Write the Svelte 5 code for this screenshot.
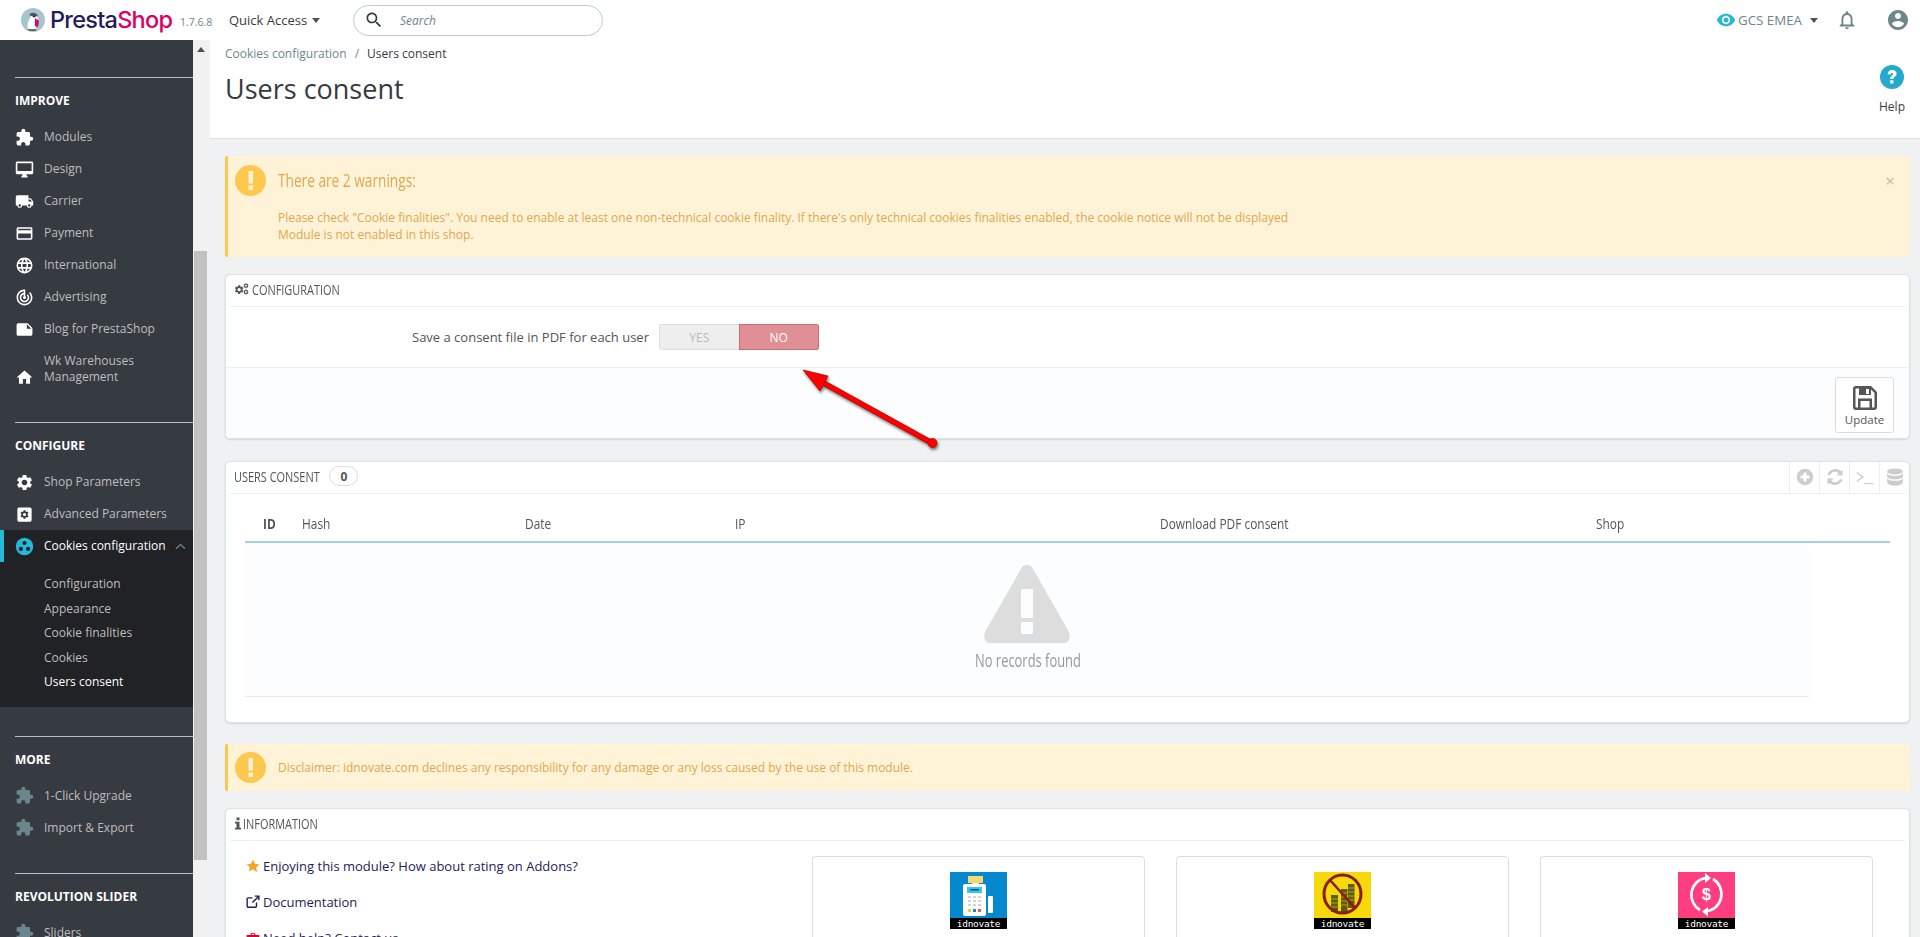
<script>
  const puzzle = "M20.5 11H19V7c0-1.1-.9-2-2-2h-4V3.5C13 2.12 11.88 1 10.5 1S8 2.12 8 3.5V5H4c-1.1 0-1.99.9-1.99 2v3.8H3.5c1.49 0 2.7 1.21 2.7 2.7s-1.21 2.7-2.7 2.7H2V20c0 1.1.9 2 2 2h3.8v-1.5c0-1.49 1.21-2.7 2.7-2.7 1.49 0 2.7 1.21 2.7 2.7V22H17c1.1 0 2-.9 2-2v-4h1.5c1.38 0 2.5-1.12 2.5-2.5S21.88 11 20.5 11z";
  const gear = "M19.14 12.94c.04-.3.06-.61.06-.94 0-.32-.02-.64-.07-.94l2.03-1.58a.49.49 0 0 0 .12-.61l-1.92-3.32a.488.488 0 0 0-.59-.22l-2.39.96c-.5-.38-1.03-.7-1.62-.94l-.36-2.54a.484.484 0 0 0-.48-.41h-3.84c-.24 0-.43.17-.47.41l-.36 2.54c-.59.24-1.13.57-1.62.94l-2.39-.96c-.22-.08-.47 0-.59.22L2.74 8.87c-.12.21-.08.47.12.61l2.03 1.58c-.05.3-.09.63-.09.94s.02.64.07.94l-2.03 1.58a.49.49 0 0 0-.12.61l1.92 3.32c.12.22.37.29.59.22l2.39-.96c.5.38 1.03.7 1.62.94l.36 2.54c.05.24.24.41.48.41h3.84c.24 0 .44-.17.47-.41l.36-2.54c.59-.24 1.13-.56 1.62-.94l2.39.96c.22.08.47 0 .59-.22l1.92-3.32c.12-.22.07-.47-.12-.61l-2.01-1.58zM12 15.6c-1.98 0-3.6-1.62-3.6-3.6s1.62-3.6 3.6-3.6 3.6 1.62 3.6 3.6-1.62 3.6-3.6 3.6z";
  const sections = [
    { title: "IMPROVE", items: [
      { label: "Modules", d: puzzle },
      { label: "Design", d: "M21 2H3c-1.1 0-2 .9-2 2v12c0 1.1.9 2 2 2h7l-2 3v1h8v-1l-2-3h7c1.1 0 2-.9 2-2V4c0-1.1-.9-2-2-2zm0 12H3V4h18v10z" },
      { label: "Carrier", d: "M20 8h-3V4H3c-1.1 0-2 .9-2 2v11h2c0 1.66 1.34 3 3 3s3-1.34 3-3h6c0 1.66 1.34 3 3 3s3-1.34 3-3h2v-5l-3-4zM6 18.5c-.83 0-1.5-.67-1.5-1.5s.67-1.5 1.5-1.5 1.5.67 1.5 1.5-.67 1.5-1.5 1.5zm13.5-9l1.96 2.5H17V9.5h2.5zm-1.5 9c-.83 0-1.5-.67-1.5-1.5s.67-1.5 1.5-1.5 1.5.67 1.5 1.5-.67 1.5-1.5 1.5z" },
      { label: "Payment", d: "M20 4H4c-1.11 0-1.99.89-1.99 2L2 18c0 1.11.89 2 2 2h16c1.11 0 2-.89 2-2V6c0-1.11-.89-2-2-2zm0 14H4v-6h16v6zm0-10H4V6h16v2z" },
      { label: "International", d: "M11.99 2C6.47 2 2 6.48 2 12s4.47 10 9.99 10C17.52 22 22 17.52 22 12S17.52 2 11.99 2zm6.93 6h-2.95c-.32-1.25-.78-2.45-1.38-3.56 1.84.63 3.37 1.91 4.33 3.56zM12 4.04c.83 1.2 1.48 2.53 1.91 3.96h-3.82c.43-1.43 1.08-2.76 1.91-3.96zM4.26 14C4.1 13.36 4 12.69 4 12s.1-1.36.26-2h3.38c-.08.66-.14 1.32-.14 2 0 .68.06 1.34.14 2H4.26zm.82 2h2.95c.32 1.25.78 2.45 1.38 3.56-1.84-.63-3.37-1.9-4.33-3.56zm2.95-8H5.08c.96-1.66 2.49-2.93 4.33-3.56C8.81 5.55 8.35 6.75 8.03 8zM12 19.96c-.83-1.2-1.48-2.53-1.91-3.96h3.82c-.43 1.43-1.08 2.76-1.91 3.96zM14.34 14H9.66c-.09-.66-.16-1.32-.16-2 0-.68.07-1.35.16-2h4.68c.09.65.16 1.32.16 2 0 .68-.07 1.34-.16 2zm.25 5.56c.6-1.11 1.06-2.31 1.38-3.56h2.95c-.96 1.65-2.49 2.93-4.33 3.56zM16.36 14c.08-.66.14-1.32.14-2 0-.68-.06-1.34-.14-2h3.38c.16.64.26 1.31.26 2s-.1 1.36-.26 2h-3.38z" },
      { label: "Advertising", d: "M19.07 4.93l-1.41 1.41C19.1 7.79 20 9.79 20 12c0 4.42-3.58 8-8 8s-8-3.58-8-8c0-4.08 3.05-7.44 7-7.93v2.02C8.16 6.57 6 9.03 6 12c0 3.31 2.69 6 6 6s6-2.69 6-6c0-1.66-.67-3.16-1.76-4.24l-1.41 1.41C15.55 9.9 16 10.9 16 12c0 2.21-1.79 4-4 4s-4-1.79-4-4c0-1.86 1.28-3.41 3-3.86v2.14c-.6.35-1 .98-1 1.72 0 1.1.9 2 2 2s2-.9 2-2c0-.74-.4-1.38-1-1.72V2h-1C6.48 2 2 6.48 2 12s4.48 10 10 10 10-4.48 10-10c0-2.76-1.12-5.26-2.93-7.07z" },
      { label: "Blog for PrestaShop", d: "M22 10l-6-6H4c-1.1 0-2 .9-2 2v12.01c0 1.1.9 1.99 2 1.99l16-.01c1.1 0 2-.89 2-1.99v-8zm-7-4.5l5.5 5.5H15V5.5z" },
      { label: "Wk Warehouses Management", d: "M10 20v-6h4v6h5v-8h3L12 3 2 12h3v8z", tall: true },
    ]},
    { title: "CONFIGURE", items: [
      { label: "Shop Parameters", d: gear },
      { label: "Advanced Parameters", d: "M5 3h14a2 2 0 0 1 2 2v14a2 2 0 0 1-2 2H5a2 2 0 0 1-2-2V5a2 2 0 0 1 2-2zm8.2 3.5h-2.4l-.3 1.6-1 .6-1.5-.6-1.2 2 1.3 1-.1.9.1.9-1.3 1 1.2 2 1.5-.6 1 .6.3 1.6h2.4l.3-1.6 1-.6 1.5.6 1.2-2-1.3-1 .1-.9-.1-.9 1.3-1-1.2-2-1.5.6-1-.6-.3-1.6zM12 10a2 2 0 1 1 0 4 2 2 0 0 1 0-4z" },
      { label: "Cookies configuration", cookie: true, active: true },
    ]},
    { title: "MORE", items: [
      { label: "1-Click Upgrade", d: puzzle, muted: true },
      { label: "Import & Export", d: puzzle, muted: true },
    ]},
    { title: "REVOLUTION SLIDER", items: [
      { label: "Sliders", d: puzzle, muted: true },
    ]},
  ];
  const sub = ["Configuration", "Appearance", "Cookie finalities", "Cookies", "Users consent"];
  const cols = ["ID", "Hash", "Date", "IP", "Download PDF consent", "Shop"];
</script>

<div class="page">
  <header class="topbar">
    <div class="logo">
      <svg class="bird" viewBox="0 0 24 24">
        <circle cx="12" cy="12" r="12" fill="#a9c5cc"/>
        <path d="M7 22c-1-5 0-9 2-12 1-3 5-4 7-2l1 3-3 2 1 7c-2 3-6 3-8 2z" fill="#fff"/>
        <path d="M8 7c2-3 7-3 9 1l-4 1c-2-1-3-1-5-2z" fill="#4a5a60"/>
        <path d="M14 10l4 3-1 6-3-1z" fill="#df0067"/>
        <circle cx="13" cy="8.5" r="1" fill="#251b5b"/>
        <path d="M6 21h9v2H8z" fill="#6c6c5c"/>
      </svg>
      <span class="wordmark"><span class="presta">Presta</span><span class="shop">Shop</span></span>
    </div>
    <span class="version">1.7.6.8</span>
    <span class="quick">Quick Access<i class="caret"></i></span>
    <div class="search">
      <svg class="mag" viewBox="0 0 24 24"><path d="M15.5 14h-.79l-.28-.27C15.41 12.59 16 11.11 16 9.5 16 5.91 13.09 3 9.5 3S3 5.91 3 9.5 5.91 16 9.5 16c1.61 0 3.09-.59 4.23-1.57l.27.28v.79l5 4.99L20.49 19l-4.99-5zm-6 0C7.01 14 5 11.99 5 9.5S7.01 5 9.5 5 14 7.01 14 9.5 11.99 14 9.5 14z"/></svg>
      <span>Search</span>
    </div>
    <div class="top-right">
      <svg class="eye" viewBox="0 0 24 24"><path d="M12 4.5C7 4.5 2.73 7.61 1 12c1.73 4.39 6 7.5 11 7.5s9.27-3.11 11-7.5c-1.73-4.39-6-7.5-11-7.5zM12 17c-2.76 0-5-2.24-5-5s2.24-5 5-5 5 2.24 5 5-2.24 5-5 5zm0-8c-1.66 0-3 1.34-3 3s1.34 3 3 3 3-1.34 3-3-1.34-3-3-3z"/></svg>
      <span class="shopname">GCS EMEA</span>
      <i class="caret"></i>
      <svg class="bell" viewBox="0 0 24 24"><path d="M12 22c1.1 0 2-.9 2-2h-4c0 1.1.9 2 2 2zm6-6v-5c0-3.07-1.63-5.64-4.5-6.32V4c0-.83-.67-1.5-1.5-1.5s-1.5.67-1.5 1.5v.68C7.64 5.36 6 7.92 6 11v5l-2 2v1h16v-1l-2-2zm-2 1H8v-6c0-2.48 1.51-4.5 4-4.5s4 2.02 4 4.5v6z"/></svg>
      <svg class="user" viewBox="2 2 20 20"><path d="M12 2C6.48 2 2 6.48 2 12s4.48 10 10 10 10-4.48 10-10S17.52 2 12 2zm0 3c1.66 0 3 1.34 3 3s-1.34 3-3 3-3-1.34-3-3 1.34-3 3-3zm0 14.2c-2.5 0-4.71-1.28-6-3.22.03-1.99 4-3.08 6-3.08 1.99 0 5.97 1.09 6 3.08-1.29 1.94-3.5 3.22-6 3.22z"/></svg>
    </div>
  </header>

  <div class="frame">
    <nav class="sidebar">
      {#each sections as s}
        <section class="navsec">
          <h4>{s.title}</h4>
          {#each s.items as it}
            <div class="item" class:tall={it.tall} class:active={it.active} class:muted={it.muted}>
              {#if it.cookie}
                <svg class="ic" viewBox="0 0 24 24"><circle cx="12" cy="12" r="11" fill="#25b9d7"/><circle cx="12" cy="7.5" r="2.6" fill="#202226"/><circle cx="7.5" cy="15" r="2.6" fill="#202226"/><circle cx="16.5" cy="15" r="2.6" fill="#202226"/></svg>
              {:else}
                <svg class="ic" viewBox="0 0 24 24"><path d={it.d}/></svg>
              {/if}
              <span class="lbl">{it.label}</span>
              {#if it.active}
                <svg class="chev" viewBox="0 0 12 8"><path d="M1 6.5l5-5 5 5"/></svg>
              {/if}
            </div>
            {#if it.active}
              <div class="submenu">
                {#each sub as t, i}
                  <div class="subitem" class:cur={i === sub.length - 1}>{t}</div>
                {/each}
              </div>
            {/if}
          {/each}
        </section>
      {/each}
    </nav>

    <div class="scrollbar">
      <i class="up"></i>
      <div class="thumb"></div>
    </div>

    <main class="main">
      <div class="head">
        <div class="crumbs"><span class="c1">Cookies configuration</span><span class="sep">/</span><span class="c2">Users consent</span></div>
        <h1>Users consent</h1>
        <div class="help">
          <svg viewBox="0 0 24 24"><circle cx="12" cy="12" r="12" fill="#25a9cf"/><path d="M7.600 9.200c.3-2.700 2.200-4.200 4.600-4.200 2.600 0 4.400 1.500 4.400 3.800 0 2.900-3.200 3-3.200 5.200h-3.200c0-3.500 3-3.500 3-4.900 0-.7-.5-1.200-1.200-1.200-.8 0-1.300.6-1.500 1.600zM10.200 15.200h3.200v3.200h-3.200z" fill="#fff"/></svg>
          <span>Help</span>
        </div>
      </div>

      <div class="content">
        <div class="alert big">
          <svg class="warn" viewBox="0 0 31 31"><circle cx="15.500" cy="15.500" r="15.500" fill="#fec84f"/><rect x="13.500" y="6" width="4.500" height="12.500" fill="#fff3d7"/><rect x="13.500" y="20.500" width="4.500" height="4.500" fill="#fff3d7"/></svg>
          <div class="alert-body">
            <div class="alert-title"><span class="cond">There are 2 warnings:</span></div>
            <p>Please check "Cookie finalities". You need to enable at least one non-technical cookie finality. If there's only technical cookies finalities enabled, the cookie notice will not be displayed</p>
            <p>Module is not enabled in this shop.</p>
          </div>
          <span class="close">×</span>
        </div>

        <section class="panel cfg">
          <div class="phead">
            <svg class="cogs" viewBox="0 0 24 20"><path d={gear} transform="translate(-2 1.500) scale(.72)" fill="#555"/><path d={gear} transform="translate(12.500 -1) scale(.42)" fill="#555"/><path d={gear} transform="translate(12.500 9) scale(.42)" fill="#555"/></svg>
            <span class="cond">CONFIGURATION</span>
          </div>
          <div class="form-row">
            <label for="pdf-toggle">Save a consent file in PDF for each user</label>
            <div class="toggle" id="pdf-toggle"><span class="yes">YES</span><span class="no">NO</span></div>
          </div>
          <div class="pfoot">
            <div class="update">
              <svg viewBox="0 0 24 24"><path fill-rule="evenodd" d="M3 0h15l6 6v15a3 3 0 0 1-3 3H3a3 3 0 0 1-3-3V3a3 3 0 0 1 3-3zm3 2.500H3a.5.5 0 0 0-.5.5v18c0 .3.2.5.5.5h2v-9h14v9h2c.3 0 .5-.2.5-.5V7l-3.500-3.500V9H6zm1.500 12.500v6.500h9V15zM13 3h3v5h-3z" fill="#555"/></svg>
              <span>Update</span>
            </div>
          </div>
        </section>

        <section class="panel list">
          <div class="phead list-head">
            <span class="cond">USERS CONSENT</span>
            <span class="badge">0</span>
            <div class="tools">
              <span class="tool"><svg viewBox="0 0 24 24"><path d="M12 1a11 11 0 1 0 0 22 11 11 0 0 0 0-22zm6 13h-4v4h-4v-4H6v-4h4V6h4v4h4z"/></svg></span>
              <span class="tool"><svg viewBox="0 0 24 24"><path d="M22 2v8h-8l3-3a7 7 0 0 0-11.500 2.500l-3.500-1A11 11 0 0 1 19.700 4.300zM2 22v-8h8l-3 3a7 7 0 0 0 11.500-2.500l3.500 1A11 11 0 0 1 4.300 19.700z"/></svg></span>
              <span class="tool"><svg viewBox="0 0 24 24"><path d="M1 6l8 6-8 6" fill="none" stroke="#ccc" stroke-width="2"/><path d="M11 20h12v1.500H11z"/></svg></span>
              <span class="tool"><svg viewBox="0 0 24 24"><ellipse cx="12" cy="4.500" rx="10.500" ry="4"/><path d="M1.500 7c1 2.500 5 3.500 10.500 3.500S21.500 9.500 22.500 7v4.500c-1 2.500-5 3.500-10.500 3.500S2.500 14 1.500 11.500zM1.500 13.500C2.500 16 6.500 17 12 17s9.500-1 10.500-3.500V19c-1 3-5 4.500-10.500 4.500S2.500 22 1.500 19z"/></svg></span>
            </div>
          </div>
          <div class="table">
            <div class="thead">
              {#each cols as c}
                <span class:idcol={c === "ID"}>{c}</span>
              {/each}
            </div>
            <div class="tbody">
              <svg class="tri" viewBox="0 0 86 78"><path d="M37.500 3C39 -1 47 -1 48.500 3L85 67c2 5 0 11-5 11H6c-5 0-7-6-5-11z" fill="#ddd"/><rect x="37" y="24" width="12" height="29" rx="1" fill="#fcfdfe"/><rect x="37" y="57" width="12" height="12" rx="1" fill="#fcfdfe"/></svg>
              <div class="empty"><span class="cond">No records found</span></div>
            </div>
          </div>
        </section>

        <div class="alert small">
          <svg class="warn" viewBox="0 0 31 31"><circle cx="15.500" cy="15.500" r="15.500" fill="#fec84f"/><rect x="13.500" y="6" width="4.500" height="12.500" fill="#fff3d7"/><rect x="13.500" y="20.500" width="4.500" height="4.500" fill="#fff3d7"/></svg>
          <p>Disclaimer: idnovate.com declines any responsibility for any damage or any loss caused by the use of this module.</p>
        </div>

        <section class="panel info">
          <div class="phead">
            <svg class="i-ic" viewBox="0 0 8 16"><path d="M2 0h4v3.500H2zM0 5.500h6v8h2V16H0v-2.500h2V8H0z" fill="#555"/></svg>
            <span class="cond">INFORMATION</span>
          </div>
          <div class="info-body">
            <div class="links">
              <div class="link"><svg viewBox="0 0 24 24"><path d="M12 1l3.400 7.300 7.900 1-5.800 5.400 1.500 7.800L12 17.700l-7 3.800 1.500-7.800L.7 9.300l7.900-1z" fill="#f5a623"/></svg>Enjoying this module? How about rating on Addons?</div>
              <div class="link"><svg viewBox="0 0 24 24"><path d="M18 13v6a2 2 0 0 1-2 2H4a2 2 0 0 1-2-2V7a2 2 0 0 1 2-2h7M15 2h7v7M22 2L11 13" fill="none" stroke="#251b5b" stroke-width="2.400"/></svg>Documentation</div>
              <div class="link"><svg viewBox="0 0 24 24"><path d="M8 4h8v3h6a1 1 0 0 1 1 1v13H1V8a1 1 0 0 1 1-1h6zm2 1v2h4V5z" fill="#e5002b"/></svg>Need help? Contact us</div>
            </div>
            <div class="cards">
              <div class="card"><div class="thumb-img">
                <svg viewBox="0 0 57 46"><rect width="57" height="46" fill="#0489cf"/><rect x="18" y="4" width="15" height="7" fill="#f7d774"/><rect x="22" y="11" width="7" height="2" fill="#e8edf0"/><rect x="13" y="12" width="23" height="32" rx="2" fill="#fff"/><rect x="17" y="15" width="15" height="6" fill="#34c7f2"/><rect x="20" y="17" width="9" height="1.500" fill="#16566e"/><rect x="38" y="24" width="5" height="17" rx="1" fill="#fff"/><g fill="#d5d5d5"><rect x="18" y="24" width="3" height="2"/><rect x="23" y="24" width="3" height="2"/><rect x="28" y="24" width="3" height="2"/><rect x="18" y="28" width="3" height="2"/><rect x="23" y="28" width="3" height="2"/><rect x="28" y="28" width="3" height="2"/><rect x="18" y="32" width="3" height="2"/><rect x="23" y="32" width="3" height="2"/><rect x="28" y="32" width="3" height="2"/></g><rect x="18" y="37" width="3" height="3" fill="#f5c542"/><rect x="23" y="37" width="3" height="3" fill="#1c86d1"/><rect x="28" y="37" width="3" height="3" fill="#ef5b3c"/></svg>
                <span class="idn">idnovate</span></div></div>
              <div class="card"><div class="thumb-img">
                <svg viewBox="0 0 57 46"><rect width="57" height="46" fill="#f5d90a"/><rect x="17" y="23" width="7" height="17" fill="#5d5a14"/><rect x="27" y="17" width="6.500" height="23" fill="#5d5a14"/><rect x="34" y="12" width="6.500" height="24" fill="#5d5a14"/><g stroke="#c9b70e" stroke-width=".8"><path d="M17 27h7M17 31h7M17 35h7M27 21h6.500M27 25h6.500M27 29h6.500M27 33h6.500M34 16h6.500M34 20h6.500M34 24h6.500M34 28h6.500"/></g><ellipse cx="28.500" cy="22" rx="18.500" ry="19" fill="none" stroke="#8a1c12" stroke-width="3"/><path d="M16 8l25 28" stroke="#8a1c12" stroke-width="2.600"/></svg>
                <span class="idn">idnovate</span></div></div>
              <div class="card"><div class="thumb-img">
                <svg viewBox="0 0 57 46"><rect width="57" height="46" fill="#ff3d7f"/><path d="M22 38A16 17 0 0 1 28 6" fill="none" stroke="#fff" stroke-width="2.600"/><path d="M35 7A16 17 0 0 1 28 39" fill="none" stroke="#fff" stroke-width="2.600"/><path d="M27 1l6 5-6 5zM30 35l-6 4.500 6 5z" fill="#fff"/><text x="28.500" y="28" text-anchor="middle" class="dollar">$</text></svg>
                <span class="idn">idnovate</span></div></div>
            </div>
          </div>
        </section>
      </div>
    </main>
  </div>

  <svg class="arrow" viewBox="795 362 150 95">
    <defs><filter id="sh" x="-20%" y="-20%" width="140%" height="140%"><feDropShadow dx="1" dy="2" stdDeviation="1.500" flood-color="#000" flood-opacity=".55"/></filter></defs>
    <g filter="url(#sh)" fill="#f00" stroke="#9a0000" stroke-width=".7">
      <polygon points="825,381 823,385.500 930.800,445.200 933.200,440.800"/>
      <polygon points="803,370 828,376 820,391"/>
      <circle cx="932.500" cy="443" r="4.500"/>
    </g>
  </svg>
</div>

<style>
  :global(body) { margin: 0; background: #eff1f2; }
  .page {
    position: relative; height: 937px; overflow: hidden; display: flex; flex-direction: column;
    font-family: "Open Sans", "Liberation Sans", sans-serif; font-size: 12px; color: #363a41;
  }
  .cond { display: inline-block; transform-origin: left center; transform: scaleX(.73); white-space: nowrap; }

  .topbar { height: 40px; flex: none; background: #fff; display: flex; align-items: center; position: relative; z-index: 2; }
  .logo { display: flex; align-items: center; margin-left: 21px; width: 151px; flex: none; }
  .bird { width: 24px; height: 24px; flex: none; }
  .wordmark { font-family: "Inter", sans-serif; font-size: 23.500px; font-weight: 500; letter-spacing: -.75px; margin-left: 5px; line-height: 40px; white-space: nowrap; }
  .presta { color: #251b5b; }
  .shop { color: #df0067; }
  .version { margin-left: 8px; width: 49px; font-size: 10.500px; color: #6c868e; margin-top: 3px; flex: none; }
  .quick { font-size: 13px; color: #363a41; width: 124px; flex: none; display: flex; align-items: center; }
  .caret { display: inline-block; width: 0; height: 0; border-left: 4px solid transparent; border-right: 4px solid transparent; border-top: 5px solid #4d5358; margin-left: 5px; }
  .search { width: 250px; height: 31px; box-sizing: border-box; border: 1px solid #bbcdd2; border-radius: 16px; display: flex; align-items: center; flex: none; font-style: italic; color: #6c868e; font-size: 12px; }
  .mag { width: 20px; height: 20px; margin-left: 10px; margin-right: 16px; fill: #363a41; }
  .top-right { margin-left: auto; display: flex; align-items: center; padding-right: 12px; }
  .eye { width: 20px; height: 20px; fill: #25b9d7; margin-right: 2px; }
  .shopname { font-size: 13.300px; color: #6c868e; margin-right: 3px; }
  .bell { width: 22px; height: 22px; fill: #6c868e; margin-left: 18px; margin-right: 30px; }
  .user { width: 20px; height: 20px; fill: #6c868e; }

  .frame { flex: 1; display: flex; min-height: 0; }
  .sidebar { width: 193px; flex: none; background: #363a41; padding-top: 8px; box-sizing: border-box; overflow: hidden; }
  .navsec { margin-top: 29px; }
  .navsec h4 {
    margin: 0 0 0 15px; height: 44px; box-sizing: border-box; border-top: 1px solid #bebebe; color: #fff;
    font-size: 12px; font-weight: 700; line-height: 45px;
  }
  .item { height: 32px; display: flex; align-items: center; padding-left: 15px; color: #bebebe; position: relative; }
  .item.tall { height: 48px; }
  .item .lbl { margin-left: 10px; line-height: 16px; flex: none; max-width: 130px; }
  .ic { width: 19px; height: 19px; fill: #fff; flex: none; }
  .item.muted .ic { fill: #6c868e; }
  .item.tall .ic { margin-top: 16px; }
  .item.active { background: #202226; color: #fff; box-shadow: inset 4px 0 0 #25b9d7; }
  .chev { width: 11px; height: 7px; fill: none; stroke: #6c868e; stroke-width: 1.500; margin-left: 9px; flex: none; }
  .submenu { background: #202226; padding: 10px 0 12px 44px; color: #bebebe; }
  .subitem { height: 24.500px; line-height: 24.500px; }
  .subitem.cur { color: #fff; }

  .scrollbar { width: 17px; flex: none; background: #f1f1f1; position: relative; display: flex; flex-direction: column; align-items: center; box-sizing: border-box; }
  .up { width: 0; height: 0; border-left: 4px solid transparent; border-right: 4px solid transparent; border-bottom: 5px solid #505050; margin-top: 7px; margin-left: -1px; }
  .thumb { width: 13px; height: 609px; background: #c1c1c1; margin-top: 199px; flex: none; margin-left: -2px; }

  .main { flex: 1; min-width: 0; overflow: hidden; }
  .head { height: 99px; background: #fff; border-bottom: 1px solid #dfdfdf; box-sizing: border-box; padding: 5px 0 0 15px; position: relative; }
  .crumbs { font-size: 12px; line-height: 18px; display: flex; }
  .c1 { color: #6c868e; }
  .sep { margin: 0 8px; color: #6c868e; }
  .c2 { color: #363a41; }
  h1 { margin: 8px 0 0; font-size: 27px; font-weight: 400; line-height: 36px; color: #363a41; }
  .help { position: absolute; right: 15px; top: 25px; width: 26px; display: flex; flex-direction: column; align-items: center; font-size: 12px; color: #363a41; }
  .help svg { width: 24px; height: 24px; margin-bottom: 9px; flex: none; }

  .content { padding: 17px 10px 0 15px; }
  .alert { background: #fff3d7; border-left: 3px solid #fec84f; border-radius: 2px; box-sizing: border-box; color: #e0a74f; position: relative; display: flex; }
  .alert p { margin: 0; line-height: 17px; }
  .alert.big { height: 101px; margin-bottom: 17px; padding: 9px 0 0 7px; }
  .alert.small { height: 47px; margin: 21px 0 17px; align-items: center; padding-left: 7px; }
  .alert.small p { margin-left: 12px; }
  .warn { width: 31px; height: 31px; flex: none; }
  .alert-body { margin-left: 12px; }
  .alert-title { font-size: 19px; line-height: 26px; height: 44px; padding-top: 2px; box-sizing: border-box; font-weight: 400; }
  .alert-title .cond { transform: scaleX(.72); }
  .close { position: absolute; right: 15px; top: 15px; font-size: 17px; color: #c8bca5; line-height: 20px; }

  .panel { background: #fff; border: 1px solid #dbe2e4; border-radius: 5px; box-shadow: 0 1px 2px rgba(0,0,0,.12); box-sizing: border-box; }
  .phead { height: 32px; margin: 0 4px; border-bottom: 1px solid #eee; box-sizing: border-box; display: flex; align-items: center; padding: 0 0 3px 5px; font-size: 15px; color: #555; }
  .cogs { width: 15px; height: 13px; margin-right: 2px; flex: none; }
  .cfg { height: 165px; display: flex; flex-direction: column; overflow: hidden; }
  .form-row { height: 61px; flex: none; display: flex; align-items: center; padding-left: 186px; border-bottom: 1px solid #eee; box-sizing: border-box; font-size: 13px; color: #555; }
  .form-row label { width: 237px; margin-right: 10px; white-space: nowrap; }
  .toggle { width: 160px; height: 26px; display: flex; border-radius: 3px; overflow: hidden; font-size: 12px; }
  .toggle span { flex: 1; display: flex; align-items: center; justify-content: center; box-sizing: border-box; }
  .yes { background: #eee; color: #bbb; border: 1px solid #ddd; border-right: 0; }
  .no { background: #e08f95; color: #fff; border: 1px solid #c86f76; }
  .pfoot { flex: 1; background: #fcfdfe; display: flex; justify-content: flex-end; align-items: flex-start; padding: 9px 15px 0 0; }
  .update { width: 59px; height: 56px; box-sizing: border-box; border: 1px solid #ddd; border-radius: 3px; background: #fff; display: flex; flex-direction: column; align-items: center; font-size: 11.500px; color: #555; padding-top: 8px; }
  .update svg { width: 24px; height: 24px; margin-bottom: 2px; flex: none; }

  .list { margin-top: 22px; height: 262px; }
  .list-head { padding: 0 0 3px 4px; }
  .badge { width: 29px; height: 20px; margin-left: -22px; border: 1px solid #ddd; border-radius: 10px; font-size: 12px; font-weight: 700; display: flex; align-items: center; justify-content: center; box-sizing: border-box; color: #555; flex: none; }
  .tools { margin: -1px -4px -3px auto; display: flex; height: 31px; }
  .tool { width: 30px; height: 100%; border-left: 1px solid #eee; display: flex; align-items: center; justify-content: center; box-sizing: border-box; }
  .tool svg { width: 18px; height: 18px; fill: #ccc; }
  .table { margin: 0 19px 0 19px; }
  .thead { height: 49px; display: grid; grid-template-columns: 39px 223px 210px 425px 436px 1fr; padding: 14px 0 0 18px; box-sizing: border-box; border-bottom: 2px solid #a4cfe3; font-size: 14px; line-height: 32px; color: #555; }
  .thead span { display: inline-block; transform: scaleX(.85); transform-origin: left center; white-space: nowrap; }
  .thead .idcol { font-weight: 700; }
  .tbody { width: 1564px; height: 154px; background: #fcfdfe; border-bottom: 1px solid #e8ebed; box-sizing: border-box; display: flex; flex-direction: column; align-items: center; padding: 22px 0 0 0; }
  .tri { width: 86px; height: 78px; flex: none; }
  .empty { font-size: 19px; color: #999; margin-top: 4px; width: 105px; line-height: 26px; }
  .empty .cond { transform: scaleX(.68); }

  .i-ic { width: 6px; height: 13px; margin: 0 2px 0 0; flex: none; }
  .info { height: 300px; }
  .info-body { display: flex; padding: 15px 0 0 20px; }
  .links { width: 566px; flex: none; color: #251b5b; font-size: 13px; }
  .link { height: 36px; line-height: 20px; display: flex; }
  .link svg { width: 14px; height: 14px; margin: 3px 3px 0 0; flex: none; }
  .cards { display: flex; gap: 31px; }
  .card { width: 333px; height: 140px; box-sizing: border-box; border: 1px solid #ddd; border-radius: 4px; background: #fff; display: flex; justify-content: center; padding-top: 15px; }
  .thumb-img { width: 57px; display: flex; flex-direction: column; }
  .thumb-img svg { width: 57px; height: 46px; display: block; }
  .idn { display: block; height: 11px; background: #000; color: #fff; font-family: "DejaVu Sans Mono", monospace; font-size: 9.500px; line-height: 11px; text-align: center; letter-spacing: -.3px; }
  .dollar { fill: #fff; font-family: "Liberation Sans", sans-serif; font-size: 16px; font-weight: 700; }

  .arrow { position: absolute; left: 795px; top: 362px; width: 150px; height: 95px; pointer-events: none; overflow: visible; }
</style>
